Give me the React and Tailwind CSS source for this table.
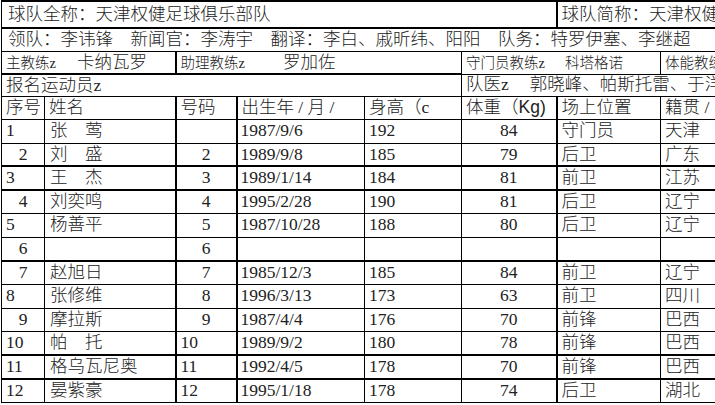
import React from "react";

const players = [
  ["1", "l", "张　莺", "", "c", "1987/9/6", "192", "84", "守门员", "天津"],
  ["2", "c", "刘　盛", "2", "c", "1989/9/8", "185", "79", "后卫", "广东"],
  ["3", "l", "王　杰", "3", "c", "1989/1/14", "184", "81", "前卫", "江苏"],
  ["4", "c", "刘奕鸣", "4", "c", "1995/2/28", "190", "81", "后卫", "辽宁"],
  ["5", "l", "杨善平", "5", "c", "1987/10/28", "188", "80", "后卫", "辽宁"],
  ["6", "c", "", "6", "c", "", "", "", "", ""],
  ["7", "c", "赵旭日", "7", "c", "1985/12/3", "185", "84", "前卫", "辽宁"],
  ["8", "l", "张修维", "8", "c", "1996/3/13", "173", "63", "前卫", "四川"],
  ["9", "c", "摩拉斯", "9", "c", "1987/4/4", "176", "70", "前锋", "巴西"],
  ["10", "l", "帕　托", "10", "l", "1989/9/2", "180", "78", "前锋", "巴西"],
  ["11", "l", "格乌瓦尼奥", "11", "l", "1992/4/5", "178", "70", "前锋", "巴西"],
  ["12", "l", "晏紫豪", "12", "l", "1995/1/18", "178", "74", "后卫", "湖北"],
];

const heights = [
  "h-[24px]", "h-[23px]", "h-[24px]", "h-[23px]", "h-[24px]", "h-[24px]",
  "h-[23px]", "h-[24px]", "h-[23px]", "h-[24px]", "h-[24px]", "h-[23px]",
];

// rows whose top line is drawn heavier in the scan
const thickTop = [false, false, true, true, false, false, true, false, false, false, true, true];

const cell = "border border-black px-[4px] whitespace-nowrap overflow-hidden align-middle";

export default function App() {
  return (
    <div
      className="w-[715px] h-[405px] overflow-hidden bg-white text-[#222]"
      style={{ fontFamily: '"Liberation Serif", "Noto Sans CJK SC", serif' }}
    >
      <table className="table-fixed border-collapse w-[759px] ml-[1px] text-[17.5px] leading-none font-light">
        <colgroup>
          <col className="w-[43px]" />
          <col className="w-[131px]" />
          <col className="w-[61px]" />
          <col className="w-[128px]" />
          <col className="w-[97px]" />
          <col className="w-[95px]" />
          <col className="w-[104px]" />
          <col className="w-[100px]" />
        </colgroup>
        <tbody>
          <tr className="h-[27px]">
            <td colSpan={6} className={cell + " border-t-2 pl-[6px]"}>
              球队全称：天津权健足球俱乐部队
            </td>
            <td colSpan={2} className={cell + " border-t-2 border-l-2"}>
              球队简称：天津权健足球俱乐部队
            </td>
          </tr>
          <tr className="h-[23px]">
            <td colSpan={8} className={cell + " border-t-2 pl-[6px]"}>
              领队：李讳锋　新闻官：李涛宇　翻译：李白、戚昕纬、阳阳　队务：特罗伊塞、李继超
            </td>
          </tr>
          <tr className="h-[23px]">
            <td colSpan={2} className={cell}>
              <span className="text-[14.5px]">主教练z</span>
              <span className="ml-[21px]">卡纳瓦罗</span>
            </td>
            <td colSpan={3} className={cell + " border-l-2"}>
              <span className="text-[14.5px]">助理教练z</span>
              <span className="ml-[38px]">罗加佐</span>
            </td>
            <td colSpan={2} className={cell}>
              <span className="text-[14.5px]">守门员教练z</span>
              <span className="ml-[20px] text-[14.5px]">科塔格诺</span>
            </td>
            <td className={cell}>
              <span className="text-[14.5px]">体能教练z</span>
            </td>
          </tr>
          <tr className="h-[22px]">
            <td colSpan={5} className={cell + " border-t-2"}>
              报名运动员z
            </td>
            <td colSpan={3} className={cell}>
              队医z<span className="ml-[21px]">郭晓峰、帕斯托雷、于洋</span>
            </td>
          </tr>
          <tr className="h-[23px]">
            <td className={cell}>序号</td>
            <td className={cell}>姓名</td>
            <td className={cell + " border-l-2"}>号码</td>
            <td className={cell + " border-l-2"}>出生年 / 月 /</td>
            <td className={cell}>身高（c</td>
            <td className={cell}>
              体重（<span style={{ fontFamily: '"Liberation Sans", sans-serif' }}>Kg)</span>
            </td>
            <td className={cell + " border-l-2"}>场上位置</td>
            <td className={cell}>籍贯 /</td>
          </tr>
          {players.map((p, i) => {
            const top = thickTop[i] ? " border-t-2" : "";
            return (
              <tr key={i} className={heights[i]}>
                <td className={cell + top + (p[1] === "c" ? " text-center" : "")}>{p[0]}</td>
                <td className={cell + top + " pl-[5px]"}>{p[2]}</td>
                <td className={cell + top + " border-l-2" + (p[4] === "c" ? " text-center" : "")}>{p[3]}</td>
                <td className={cell + top + " border-l-2 pl-[3px]"}>{p[5]}</td>
                <td className={cell + top}>{p[6]}</td>
                <td className={cell + top + " text-center"}>{p[7]}</td>
                <td className={cell + top + " border-l-2"}>{p[8]}</td>
                <td className={cell + top}>{p[9]}</td>
              </tr>
            );
          })}
        </tbody>
      </table>
    </div>
  );
}
